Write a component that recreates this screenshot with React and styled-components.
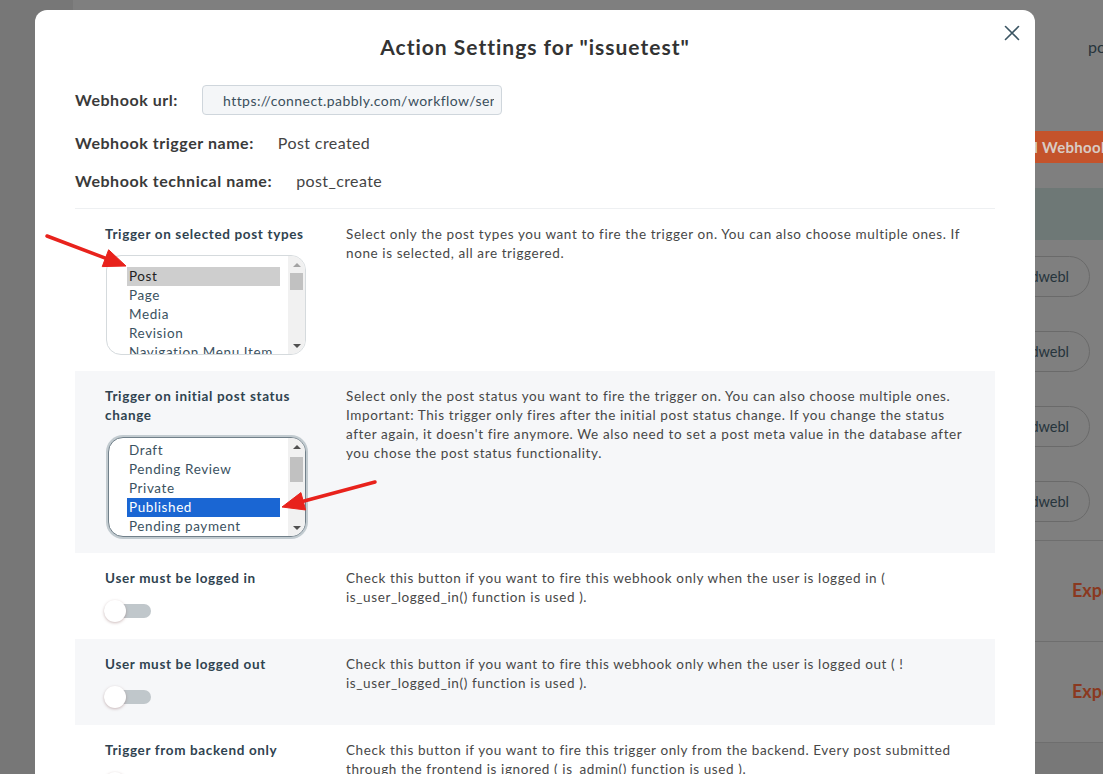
import React from 'react';
import styled, { createGlobalStyle } from 'styled-components';

const GlobalStyle = createGlobalStyle`
  html, body { margin: 0; padding: 0; }
  body {
    width: 1103px;
    height: 774px;
    overflow: hidden;
    background: #7f7f7f;
    font-family: Lato, "Open Sans", sans-serif;
  }
`;

const Screen = styled.div`
  position: relative;
  width: 1103px;
  height: 774px;
  overflow: hidden;
`;

/* ---------- dimmed page behind the dialog ---------- */

const BackPage = styled.div`
  display: grid;
  grid-template-columns: 73px 1fr;
  height: 100%;
`;

const BackSidebar = styled.div`
  background: #777777;
`;

const BackMain = styled.div`
  display: flex;
  flex-direction: column;
  background: #7f7f7f;
  overflow: hidden;
  white-space: nowrap;
`;

const Lane = styled.div`
  flex-shrink: 0;
  display: flex;
  align-items: flex-start;
  justify-content: ${p => (p.$end ? 'flex-end' : 'flex-start')};
  height: ${p => p.$height}px;
  padding-top: ${p => p.$top || 0}px;
  padding-left: ${p => p.$inset || 0}px;
  padding-right: ${p => (p.$end ? p.$end : 0)}px;
  box-sizing: border-box;
  background: ${p => p.$bg || 'transparent'};
  border-top: ${p => (p.$rule ? '1px solid #6e6e6e' : 'none')};
`;

const BackText = styled.span`
  font-size: 16px;
  line-height: 20px;
  color: #26343c;
`;

const BackButton = styled.span`
  display: inline-flex;
  align-items: center;
  height: 32px;
  padding: 0 16px;
  border-radius: 4px;
  background: #c4532b;
  color: #d9cbc4;
  font-size: 15px;
  font-weight: 700;
  letter-spacing: 0.3px;
`;

const BackPill = styled.span`
  display: inline-flex;
  align-items: center;
  height: 41px;
  padding: 0 20px 0 24px;
  border: 1px solid #6a6a6a;
  border-radius: 21px;
  box-sizing: border-box;
  color: #26343c;
  font-size: 14.5px;
`;

const BackLink = styled.span`
  color: #8a391f;
  font-size: 18px;
  font-weight: 700;
  line-height: 24px;
`;

/* ---------- dialog ---------- */

const Dialog = styled.div`
  position: absolute;
  left: 35px;
  top: 10px;
  width: 1000px;
  height: 820px;
  box-sizing: border-box;
  padding: 23px 40px 0;
  background: #fff;
  border-radius: 12px;
`;

const CloseButton = styled.button`
  position: absolute;
  top: 15px;
  right: 15px;
  width: 16px;
  height: 16px;
  padding: 0;
  border: 0;
  background: none;
  cursor: pointer;
  display: flex;
`;

const Title = styled.h2`
  margin: 0 0 24px;
  text-align: center;
  font-size: 21px;
  line-height: 28px;
  font-weight: 700;
  letter-spacing: 1px;
  color: #333;
`;

const InfoList = styled.div`
  display: flex;
  flex-direction: column;
  gap: 18px;
  padding-bottom: 17px;
  border-bottom: 1px solid #eef0f2;
`;

const InfoRow = styled.div`
  display: flex;
  align-items: center;
  gap: 24px;
  min-height: 20px;
`;

const InfoLabel = styled.span`
  font-size: 16px;
  line-height: 20px;
  font-weight: 700;
  letter-spacing: 0.55px;
  color: #3a3a3a;
`;

const InfoValue = styled.span`
  font-size: 16px;
  line-height: 20px;
  letter-spacing: 0.4px;
  color: #444;
`;

const UrlInput = styled.input`
  width: 300px;
  height: 30px;
  box-sizing: border-box;
  padding: 0 7px 0 20px;
  border: 1px solid #cfd6dc;
  border-radius: 4px;
  background: #f4f6f8;
  font-family: inherit;
  font-size: 14px;
  letter-spacing: 0.45px;
  color: #3a4f5c;
  outline: none;
`;

const SettingRow = styled.div`
  display: grid;
  grid-template-columns: 241px 1fr;
  padding: 16px 30px;
  background: ${p => (p.$shaded ? '#f6f7f9' : '#fff')};
`;

const SettingHead = styled.div`
  display: flex;
  flex-direction: column;
  align-items: flex-start;
`;

const SettingLabel = styled.div`
  max-width: 210px;
  font-size: 13.5px;
  line-height: 19px;
  font-weight: 700;
  letter-spacing: 0.65px;
  color: #2f4350;
`;

const SettingText = styled.p`
  margin: 0;
  font-size: 13.5px;
  line-height: 19px;
  letter-spacing: 0.6px;
  color: #474747;
`;

/* list box drawn like a native multi select */
const ListBox = styled.div`
  position: relative;
  width: ${p => (p.$focused ? 198 : 200)}px;
  height: 100px;
  box-sizing: border-box;
  margin: ${p => (p.$focused ? '12px 0 0 3px' : '11px 0 0 1px')};
  border: 1px solid ${p => (p.$focused ? '#71808a' : '#d5dadd')};
  border-radius: 15px;
  box-shadow: ${p => (p.$focused ? '0 0 0 2px #c2cbd0' : 'none')};
  background: #fff;
  overflow: hidden;
`;

const OptionList = styled.ul`
  list-style: none;
  margin: 0;
  padding: ${p => p.$top}px 0 0 ${p => p.$left}px;
  width: 153px;
`;

const Option = styled.li`
  height: 19px;
  padding-left: 2px;
  font-size: 13.5px;
  line-height: 19px;
  letter-spacing: 0.6px;
  white-space: nowrap;
  color: ${p => (p.$tone === 'active' ? '#fff' : p.$tone === 'muted' ? '#222' : '#3b5261')};
  background: ${p => (p.$tone === 'active' ? '#1a66d3' : p.$tone === 'muted' ? '#cecece' : 'transparent')};
`;

const ScrollTrack = styled.div`
  position: absolute;
  top: 0;
  bottom: 0;
  right: 0;
  width: 17px;
  display: flex;
  flex-direction: column;
  background: #f1f1f1;
`;

const ScrollStep = styled.div`
  height: 17px;
  display: flex;
  align-items: center;
  justify-content: center;
  &::before {
    content: '';
    width: 0;
    height: 0;
    border-left: 4px solid transparent;
    border-right: 4px solid transparent;
    ${p => (p.$down ? 'border-top' : 'border-bottom')}: 4px solid ${p => (p.$dim ? '#a3a3a3' : '#505050')};
  }
`;

const ScrollLane = styled.div`
  flex: 1;
  padding: ${p => p.$offset}px 2px 0;
`;

const ScrollThumb = styled.div`
  height: ${p => p.$size}px;
  background: #c1c1c1;
`;

const Toggle = styled.div`
  position: relative;
  width: 47px;
  height: 24px;
  margin-top: 11px;
  margin-left: -1px;
  display: flex;
  align-items: center;
`;

const ToggleTrack = styled.div`
  width: 47px;
  height: 14px;
  border-radius: 7px;
  background: #c0c7cb;
`;

const ToggleKnob = styled.div`
  position: absolute;
  left: 0;
  top: 1px;
  width: 22px;
  height: 22px;
  border-radius: 50%;
  background: #fff;
  box-shadow: 0 1px 3px rgba(110, 60, 60, 0.35);
`;

/* annotation layer */
const Marks = styled.svg`
  position: absolute;
  left: 0;
  top: 0;
  width: 1103px;
  height: 774px;
  pointer-events: none;
`;

function Pointer({ from, to }) {
  const [x1, y1] = from;
  const [x2, y2] = to;
  const dx = x2 - x1;
  const dy = y2 - y1;
  const len = Math.hypot(dx, dy);
  const ux = dx / len;
  const uy = dy / len;
  const head = 22;
  const half = 9;
  const bx = x2 - ux * head;
  const by = y2 - uy * head;
  const px = -uy;
  const py = ux;
  const pts = `${x2},${y2} ${bx + px * half},${by + py * half} ${bx - px * half},${by - py * half}`;
  return (
    <g fill="#e8221c" stroke="#e8221c">
      <line x1={x1} y1={y1} x2={bx + ux * 2} y2={by + uy * 2} strokeWidth="3.5" strokeLinecap="round" />
      <polygon points={pts} strokeWidth="1" strokeLinejoin="round" />
    </g>
  );
}

function SelectBox({ options, focused, top, left, thumbOffset, thumbSize, atStart }) {
  return (
    <ListBox $focused={focused}>
      <OptionList $top={top} $left={left}>
        {options.map(o => (
          <Option key={o.label} $tone={o.tone}>{o.label}</Option>
        ))}
      </OptionList>
      <ScrollTrack>
        <ScrollStep $dim={atStart} />
        <ScrollLane $offset={thumbOffset}>
          <ScrollThumb $size={thumbSize} />
        </ScrollLane>
        <ScrollStep $down />
      </ScrollTrack>
    </ListBox>
  );
}

function Switch() {
  return (
    <Toggle>
      <ToggleTrack />
      <ToggleKnob />
    </Toggle>
  );
}

const postTypes = [
  { label: 'Post', tone: 'muted' },
  { label: 'Page' },
  { label: 'Media' },
  { label: 'Revision' },
  { label: 'Navigation Menu Item' },
  { label: 'Custom CSS' },
];

const postStatuses = [
  { label: 'Draft' },
  { label: 'Pending Review' },
  { label: 'Private' },
  { label: 'Published', tone: 'active' },
  { label: 'Pending payment' },
  { label: 'Processing' },
];

export default function App() {
  return (
    <Screen>
      <GlobalStyle />
      <BackPage>
        <BackSidebar />
        <BackMain>
          <Lane $height={131} $top={37} $inset={1015}>
            <BackText>post_create</BackText>
          </Lane>
          <Lane $height={57} $inset={921}>
            <BackButton>Add Webhook</BackButton>
          </Lane>
          <Lane $height={52} $bg="#6e7876" />
          {[0, 1, 2, 3].map(i => (
            <Lane key={i} $height={75} $top={16} $end={13}>
              <BackPill>Sendwebl</BackPill>
            </Lane>
          ))}
          {[0, 1].map(i => (
            <Lane key={i} $height={101} $top={37} $inset={999} $rule>
              <BackLink>Export</BackLink>
            </Lane>
          ))}
          <Lane $height={40} $bg="#787878" $rule />
        </BackMain>
      </BackPage>

      <Dialog>
        <CloseButton aria-label="Close">
          <svg width="16" height="16" viewBox="0 0 16 16">
            <path d="M1.5 1.5 L14.5 14.5 M14.5 1.5 L1.5 14.5" stroke="#3b5563" strokeWidth="1.6" strokeLinecap="round" />
          </svg>
        </CloseButton>
        <Title>Action Settings for "issuetest"</Title>

        <InfoList>
          <InfoRow>
            <InfoLabel>Webhook url:</InfoLabel>
            <UrlInput readOnly value="https://connect.pabbly.com/workflow/sendwebhookdata/IjU3NjIwNTY5MDYzMjA0MzI1MjY1NTUzNjUxMzAi_pc" />
          </InfoRow>
          <InfoRow>
            <InfoLabel>Webhook trigger name:</InfoLabel>
            <InfoValue>Post created</InfoValue>
          </InfoRow>
          <InfoRow>
            <InfoLabel>Webhook technical name:</InfoLabel>
            <InfoValue>post_create</InfoValue>
          </InfoRow>
        </InfoList>

        <SettingRow>
          <SettingHead>
            <SettingLabel>Trigger on selected post types</SettingLabel>
            <SelectBox options={postTypes} top={11} left={20} thumbOffset={0} thumbSize={17} atStart />
          </SettingHead>
          <SettingText>
            Select only the post types you want to fire the trigger on. You can also choose multiple ones. If none is selected, all are triggered.
          </SettingText>
        </SettingRow>

        <SettingRow $shaded>
          <SettingHead>
            <SettingLabel>Trigger on initial post status change</SettingLabel>
            <SelectBox options={postStatuses} focused top={3} left={18} thumbOffset={2} thumbSize={25} />
          </SettingHead>
          <SettingText>
            Select only the post status you want to fire the trigger on. You can also choose multiple ones. Important: This trigger only fires after the initial post status change. If you change the status after again, it doesn't fire anymore. We also need to set a post meta value in the database after you chose the post status functionality.
          </SettingText>
        </SettingRow>

        <SettingRow>
          <SettingHead>
            <SettingLabel>User must be logged in</SettingLabel>
            <Switch />
          </SettingHead>
          <SettingText>
            Check this button if you want to fire this webhook only when the user is logged in ( is_user_logged_in() function is used ).
          </SettingText>
        </SettingRow>

        <SettingRow $shaded>
          <SettingHead>
            <SettingLabel>User must be logged out</SettingLabel>
            <Switch />
          </SettingHead>
          <SettingText>
            Check this button if you want to fire this webhook only when the user is logged out ( ! is_user_logged_in() function is used ).
          </SettingText>
        </SettingRow>

        <SettingRow>
          <SettingHead>
            <SettingLabel>Trigger from backend only</SettingLabel>
            <Switch />
          </SettingHead>
          <SettingText>
            Check this button if you want to fire this trigger only from the backend. Every post submitted through the frontend is ignored ( is_admin() function is used ).
          </SettingText>
        </SettingRow>
      </Dialog>

      <Marks viewBox="0 0 1103 774">
        <Pointer from={[47, 236]} to={[126, 266]} />
        <Pointer from={[375, 482]} to={[282, 507]} />
      </Marks>
    </Screen>
  );
}
